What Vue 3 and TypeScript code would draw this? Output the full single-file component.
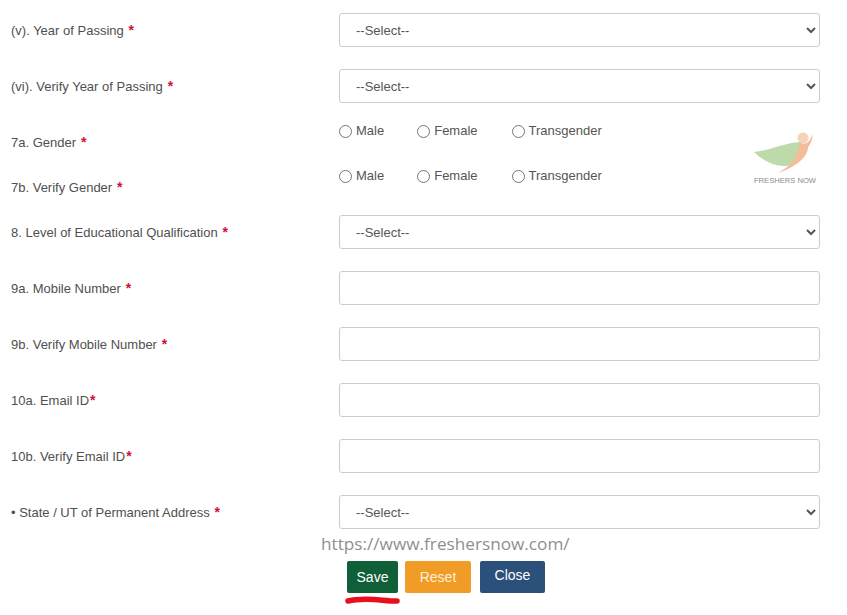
<script setup lang="ts">
interface Row { label: string; req?: string; kind: 'select' | 'input' | 'radio'; cls?: string }
const rows: Row[] = [
  { label: '(v). Year of Passing', req: ' *', kind: 'select' },
  { label: '(vi). Verify Year of Passing', req: ' *', kind: 'select' },
  { label: '7a. Gender', req: ' *', kind: 'radio', cls: 'first' },
  { label: '7b. Verify Gender', req: ' *', kind: 'radio', cls: 'second' },
  { label: '8. Level of Educational Qualification', req: ' *', kind: 'select' },
  { label: '9a. Mobile Number', req: ' *', kind: 'input' },
  { label: '9b. Verify Mobile Number', req: ' *', kind: 'input' },
  { label: '10a. Email ID', req: '*', kind: 'input' },
  { label: '10b. Verify Email ID', req: '*', kind: 'input' },
  { label: '• State / UT of Permanent Address', req: ' *', kind: 'select' },
]
const genders = ['Male', 'Female', 'Transgender']
</script>

<template>
  <div class="page">
    <form class="form" @submit.prevent>
      <div v-for="(r, i) in rows" :key="i" class="row" :class="[r.kind, r.cls]">
        <label class="lbl">{{ r.label }}<span class="req">{{ r.req }}</span></label>
        <div class="ctl">
          <select v-if="r.kind === 'select'" class="field sel"><option>--Select--</option></select>
          <input v-else-if="r.kind === 'input'" class="field" type="text" />
          <div v-else class="radios">
            <label v-for="g in genders" :key="g" class="opt">
              <input type="radio" :name="'g' + i" class="rad" /><span>{{ g }}</span>
            </label>
          </div>
        </div>
      </div>
      <div class="actions">
        <button class="btn save" type="button">Save</button>
        <button class="btn reset" type="button">Reset</button>
        <button class="btn close" type="button">Close</button>
      </div>
    </form>

    <div class="logo">
      <svg width="62" height="44" viewBox="0 0 62 44">
        <circle cx="49" cy="6" r="5.5" fill="#f5d3b8" />
        <path d="M0 20 C14 19 30 11 46 10 L50 14 C48 24 42 31 33 34 C20 35 8 28 0 20 Z" fill="#bfdaaa" />
        <path d="M59 2 C58 8 57 12 54 15 C54 25 42 35 24 41 C30 37 34 35 37 31 C43 25 44 17 46 11 C49 12 52 12 54 10 C56 8 57 6 59 2 Z" fill="#f4bd9a" />
      </svg>
      <span>FRESHERS NOW</span>
    </div>
    <div class="url">https://www.freshersnow.com/</div>
    <svg class="scribble" width="58" height="12" viewBox="0 0 58 12">
      <path d="M4 7 C12 5 20 5 30 5.5 C38 6 46 7 53 7" fill="none" stroke="#e8101c" stroke-width="5.5" stroke-linecap="round" />
    </svg>
  </div>
</template>

<style>
html, body { margin: 0; background: #fff; }
</style>

<style scoped>
.page {
  position: relative;
  width: 847px;
  height: 615px;
  overflow: hidden;
  background: #fff;
  font-family: "Liberation Sans", Arial, sans-serif;
  font-size: 13px;
  color: #555;
}
.form { padding: 13px 27px 0 11px; display: flex; flex-direction: column; }
.row { display: flex; align-items: center; height: 34px; margin-bottom: 22px; }
.row.radio { align-items: flex-start; height: 45px; margin: 0; }
.row.first { margin-top: -4px; }
.row.second { height: 28px; margin-bottom: 21px; }
.lbl { width: 328px; flex: none; color: #4f4f4f; line-height: 20px; }
.row.first .lbl { padding-top: 11px; }
.row.second .lbl { padding-top: 11px; }
.req { color: #d0103a; font-weight: 700; font-size: 14px; margin-left: 1px; }
.ctl { flex: 1; }
.field {
  display: block;
  box-sizing: border-box;
  width: 481px;
  height: 34px;
  border: 1px solid #ccc;
  border-radius: 3px;
  background: #fff;
  font: 13px "Liberation Sans", Arial, sans-serif;
  color: #555;
  padding: 6px 12px;
}
.radios { display: flex; height: 20px; align-items: center; }
.opt { display: flex; align-items: center; gap: 4px; margin-right: 33px; color: #555; line-height: 20px; }
.opt:nth-child(2) { margin-right: 34px; }
.rad { width: 13px; height: 13px; margin: 0; }
.actions { display: flex; margin: 10px 0 0 336px; align-items: flex-start; }
.btn {
  height: 32px;
  border: none;
  border-radius: 2px;
  color: #fff;
  font: 14px "Liberation Sans", Arial, sans-serif;
  padding: 0;
}
.save { width: 51px; background: #0f5f38; }
.reset { width: 66px; margin-left: 7px; background: #f09c27; color: #fdf0d8; }
.close { width: 65px; margin-left: 9px; background: #2b5079; padding-bottom: 4px; }
.logo {
  position: absolute;
  left: 753px;
  top: 132px;
  width: 64px;
  display: flex;
  flex-direction: column;
  align-items: center;
  font-size: 7.6px;
  color: #8b8b8b;
  white-space: nowrap;
}
.url {
  position: absolute;
  left: 321px;
  top: 532px;
  font-family: "Open Sans", sans-serif;
  font-size: 17.2px;
  line-height: 24px;
  color: #8f8f8f;
}
.scribble { position: absolute; left: 344px; top: 594px; }
</style>
